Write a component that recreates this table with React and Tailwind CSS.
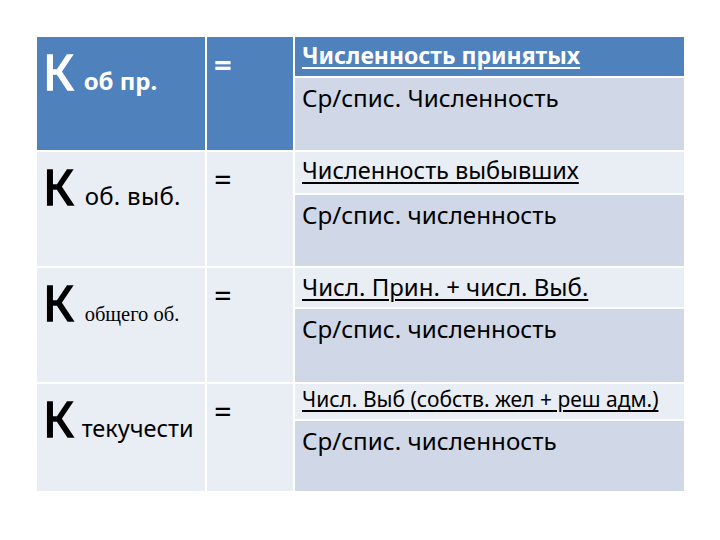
const rows = [
  {
    label: "об пр.",
    labelClass: "text-[24px] font-bold ml-[10px]",
    head: true,
    top: "Численность принятых",
    topClass: "text-[23px] font-bold text-white",
    bottom: "Ср/спис. Численность",
    h: "h-[113px]",
    topH: "h-[39px]",
    topPad: "pt-[7px]",
  },
  {
    label: "об. выб.",
    labelClass: "text-[24px] tracking-[0.3px] ml-[11px]",
    top: "Численность выбывших",
    topClass: "text-[23.5px]",
    bottom: "Ср/спис. численность",
    h: "h-[114px]",
    topH: "h-[41px]",
    topPad: "pt-[7px]",
  },
  {
    label: "общего об.",
    labelClass: "text-[20.5px] font-['Liberation_Serif',serif] ml-[11px]",
    top: "Числ. Прин. + числ. Выб.",
    topClass: "text-[24px]",
    bottom: "Ср/спис. численность",
    h: "h-[114px]",
    topH: "h-[39px]",
    topPad: "pt-[7px]",
  },
  {
    label: "текучести",
    labelClass: "text-[23.5px] ml-[8px]",
    top: "Числ. Выб (собств. жел + реш адм.)",
    topClass: "text-[21px]",
    bottom: "Ср/спис. численность",
    h: "h-[107px]",
    topH: "h-[35px]",
    topPad: "pt-[5px]",
  },
]

export default function App() {
  return (
    <div className="w-[720px] h-[540px] bg-white pt-[37px] pl-[37px] font-['Noto_Sans',sans-serif]">
      <div className="flex flex-col gap-[2px] w-[647px]">
        {rows.map((row, i) => {
          const cell = row.head ? "bg-[#4f81bd] text-white" : "bg-[#e9edf4] text-black"
          return (
            <div key={i} className={`flex gap-[2px] ${row.h}`}>
              {/* K cell */}
              <div className={`w-[168px] ${cell} pl-[6px] pt-[10px]`}>
                <div className="flex items-baseline leading-none">
                  <span className="text-[49px] leading-none [-webkit-text-stroke:1.6px_currentColor]">К</span>
                  <span className={`${row.labelClass} leading-none`}>{row.label}</span>
                </div>
              </div>

              {/* equals */}
              <div className={`w-[86px] ${cell} pl-[7px] pt-[12px]`}>
                <span className={`text-[31px] leading-none ${row.head ? "font-bold" : ""}`}>=</span>
              </div>

              {/* formula */}
              <div className="flex-1 flex flex-col gap-[2px]">
                <div className={`${row.topH} ${cell} pl-[7px] ${row.topPad}`}>
                  <span className={`${row.topClass} leading-none underline decoration-2 underline-offset-[3px]`}>
                    {row.top}
                  </span>
                </div>
                <div className="flex-1 bg-[#d0d8e8] text-black pl-[7px] pt-[8px]">
                  <span className="text-[24.2px] leading-none">{row.bottom}</span>
                </div>
              </div>
            </div>
          )
        })}
      </div>
    </div>
  )
}
